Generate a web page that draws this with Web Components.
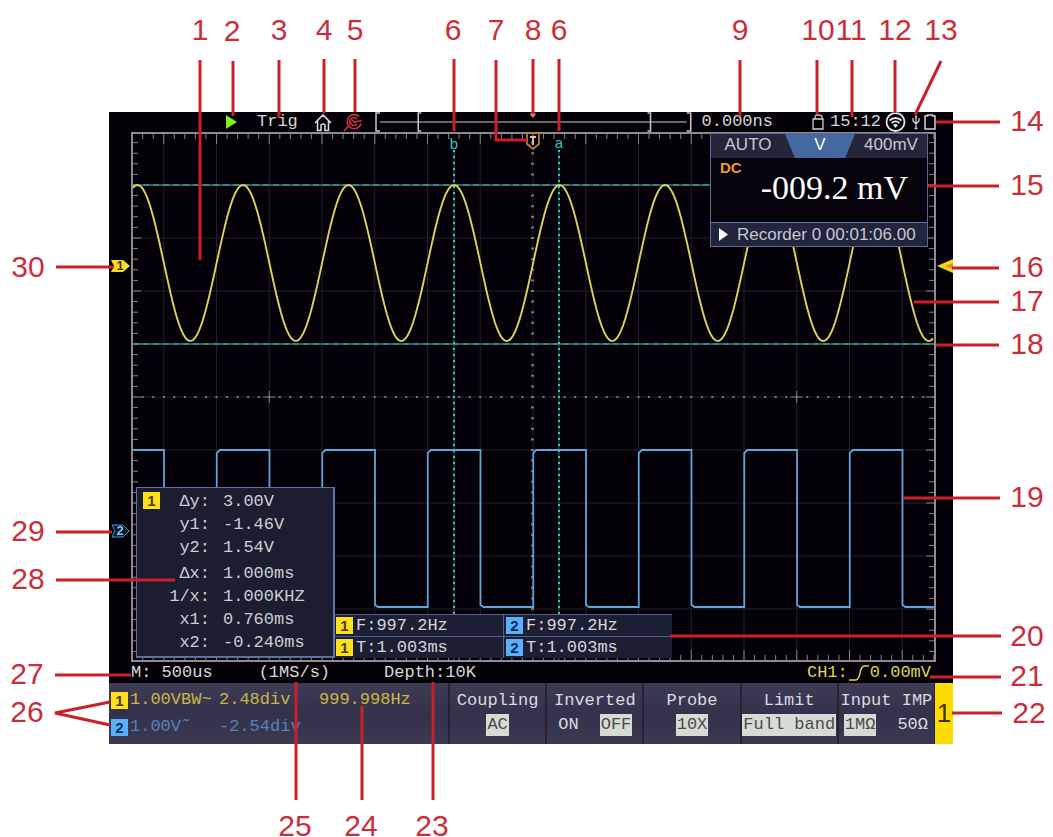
<!DOCTYPE html>
<html lang="en">
<head>
<meta charset="utf-8">
<title>Oscilloscope display guide</title>
<style>
body { margin: 0; background: #fff; font-family: "Liberation Sans", Arial, sans-serif; }
</style>
</head>
<body>
<display-guide></display-guide>
<script>
const define = (name, html, setup) => {
  const template = document.createElement('template');
  template.innerHTML = html;
  customElements.define(name, class extends HTMLElement {
    connectedCallback() {
      if (this.shadowRoot) return;
      this.attachShadow({ mode: 'open' }).append(template.content.cloneNode(true));
      if (setup) setup(this, this.shadowRoot);
    }
  });
};

/* Numbered square that names a channel */
define('channel-badge', `
<style>
:host { display: block; flex: none; width: 17px; height: 17px; background: #ffe01c; color: #4a3a00;
  font: bold 15px/17px "Liberation Sans", Arial, sans-serif; text-align: center; white-space: normal; }
:host([channel="2"]) { background: #5cb0fa; color: #06305e; }
</style><slot></slot>`);

/* Top status line */
define('status-bar', `
<style>
:host { display: flex; align-items: center; height: 20px; padding-left: 116px; padding-right: 17px;
  color: #d6d6d6; font: 17px/20px "Liberation Mono", monospace; white-space: nowrap; }
svg { display: block; flex: none; }
.trig { margin: 0 16px 0 20px; }
.zoom { margin-left: 11px; }
.overview { flex: 1; height: 20px; margin-left: 12px; min-width: 0; }
.delay { margin-left: 10px; }
.lock { margin: 0 6px 0 39px; }
.wifi { margin-left: 4px; }
.usb { margin: 0 4px 0 6px; }
</style>
<svg width="12" height="14" viewBox="0 0 12 14"><path d="M1 0L12 7 1 14z" fill="#7df01e"/></svg>
<span class="trig">Trig</span>
<svg width="18" height="19" viewBox="0 0 18 19" fill="none" stroke="#d6d6d6" stroke-width="1.6"><path d="M1 10L9 2l8 8M3.5 8v9.500h3.500v-5.500q2-2 4 0v5.500h3.500V8"/></svg>
<svg class="zoom" width="20" height="20" viewBox="0 0 20 20" fill="none" stroke="#c8323c" stroke-width="1.700"><path d="M16 4.500A7 7 0 1 0 18 11.500M5 14.500L1 19M14 7a4 4 0 1 0 0 5M9 8l3 2.500 3-1.500h4"/></svg>
<svg class="overview" viewBox="0 0 315 20" preserveAspectRatio="none" fill="none" stroke="#c9c9c9">
<path d="M5 1H1v18h4M310 1h4v18h-4M46 1h-3v18h3M271 1h3v18h-3" stroke-width="1.500"/><path d="M5 10H310" />
<path d="M154.500 1h5v2l-2.500 3-2.500-3z" fill="#c98a50" stroke="none"/></svg>
<span class="delay">0.000ns</span>
<svg class="lock" width="12" height="16" viewBox="0 0 12 16" fill="none" stroke="#cfcfcf" stroke-width="1.300"><path d="M1 5h10v10H1zM3 5V3q0-2 3-2 4 0 4 2v2"/></svg>
<time>15:12</time>
<svg class="wifi" width="21" height="20" viewBox="0 0 21 20" fill="none" stroke="#e8e8e8" stroke-width="1.800"><circle cx="10.500" cy="10" r="9"/><path d="M4.500 8.500q6-5 12 0M6.500 11q4-3.200 8 0"/><path d="M8 13q2.500-2 5 0L10.500 16z" fill="#e8e8e8" stroke="none"/></svg>
<svg class="usb" width="8" height="15" viewBox="0 0 8 15" fill="none" stroke="#d0d0d0" stroke-width="1.300"><path d="M4 2v12M1 3v3l3 3 3-3V3M3 1.500h2M2.500 13.500h3"/></svg>
<svg width="12" height="16" viewBox="0 0 12 16" fill="none" stroke="#cfcfcf" stroke-width="1.500"><path d="M1 2h2.500V1h5v1H11v13H1z"/></svg>`);

/* Graticule, waveforms and measuring cursors */
define('wave-grid', `
<style>
:host { display: block; position: absolute; inset: 0; }
svg { display: block; width: 100%; height: 100%; }
path { fill: none; }
text { font: 15px "Liberation Sans", Arial, sans-serif; fill: #35c3c0; text-anchor: middle; }
</style>
<svg viewBox="0 0 805 530" preserveAspectRatio="none">
<path id="grid" stroke="#252129"/>
<path id="ticks" stroke="#86808a"/>
<path id="dots" stroke="#7b767f" stroke-width="2"/>
<rect x="1" y="1" width="803" height="528" fill="none" stroke="#8f8b93" stroke-width="2"/>
<path d="M2 53H803M2 212H803" stroke="#267e7e" stroke-width="1.500"/>
<path d="M2 53H803M2 212H803" stroke="#58ab9e" stroke-dasharray="6 4"/>
<path d="M323 18V528M428 18V528" stroke="#1c6468"/>
<path d="M323 18V528M428 18V528" stroke="#4dc4b0" stroke-width="2" stroke-dasharray="2 4"/>
<path id="square" stroke="#5fa5d8" stroke-width="1.800"/>
<path id="sine" stroke="#dcd35c" stroke-width="1.900"/>
<path d="M396 1h12v11l-6 5-6-5z" stroke="#b98236" stroke-width="1.700"/><path d="M399 5h6M402 5v8" stroke="#d8c9a0" stroke-width="1.800"/>
<text x="323" y="17">b</text><text x="428" y="16">a</text>
</svg>`, (host, root) => {
  const set = (id, d) => root.getElementById(id).setAttribute('d', d);
  const centre = 402, division = 52.75, middle = 265;
  let grid = '', ticks = '', dots = '';
  for (let k = -7; k <= 7; k++) grid += `M${centre + k * division} 2V528`;
  for (let k = 1; k < 10; k++) grid += `M2 ${k * 53}H803`;
  for (let k = -38; k <= 38; k++) {
    const x = centre + k * division / 5, size = k % 5 ? 5 : 10;
    ticks += `M${x} 2v${size}M${x} 528v-${size}`;
    dots += `M${x - 1} ${middle}h2`;
  }
  for (let k = 1; k < 50; k++) {
    const y = k * 10.6, size = k % 5 ? 5 : 8;
    ticks += `M2 ${y}h${size}M803 ${y}h-${size}`;
    dots += `M${centre - 2} ${y}h3`;
  }
  for (const k of [-5, 5]) ticks += `M${centre + k * division - 6} ${middle}h12m-6-6v12`;
  set('grid', grid); set('ticks', ticks); set('dots', dots);

  let sine = '';
  for (let x = 2; x <= 803; x += 2)
    sine += `${sine ? 'L' : 'M'}${x} ${(131 - 78 * Math.cos((x - 323) / (2 * division) * 2 * Math.PI)).toFixed(1)}`;
  set('sine', sine);

  let square = 'M2 318H33';
  for (let x = 33; x < 780; x += 2 * division) {
    const rise = x + division, fall = rise + division;
    square += `V473l3 2H${Math.min(rise, 803)}`;
    if (rise < 803) square += `V321l3-3H${fall}`;
  }
  set('square', square);
});

/* Multimeter read-out */
define('meter-panel', `
<style>
:host { display: flex; flex-direction: column; width: 218px; height: 114px; box-sizing: border-box;
  border: 1px solid #5c6a90; background: #07030c; color: #c8c8d0; font: 17px/21px "Liberation Sans", Arial, sans-serif; }
header { display: grid; grid-template-columns: 74px 70px 1fr; height: 24px; flex: none; background: #24243a; text-align: center; }
.mode { background: #43679f; color: #fff; clip-path: polygon(0 0, 100% 0, 86% 100%, 14% 100%); }
.body { flex: 1; padding: 1px 19px 0 9px; min-height: 0; }
.type { font: bold 15px/17px "Liberation Sans", Arial, sans-serif; color: #e99a43; }
.value { font: 34px/32px "Liberation Serif", serif; color: #fff; text-align: right; white-space: nowrap; margin-top: -4px; }
footer { display: flex; flex: none; align-items: center; gap: 9px; height: 23px; border-top: 1px solid #62739e; padding-left: 7px; background: #20243c; white-space: nowrap; }
</style>
<header><span>AUTO</span><span class="mode">V</span><span>400mV</span></header>
<div class="body"><div class="type">DC</div><div class="value">-009.2 mV</div></div>
<footer><svg width="10" height="13" viewBox="0 0 10 13"><path d="M1 0L10 6.500 1 13z" fill="#fff"/></svg><span>Recorder 0 00:01:06.00</span></footer>`);

/* Cursor measurements */
define('cursor-panel', `
<style>
:host { display: block; position: relative; width: 199px; height: 171px; box-sizing: border-box; padding: 2px 0 0 4px;
  border: 2px solid #60729f; border-top-width: 1px; border-left-width: 1px; background: #1c1d31; color: #cdcdd2; font: 17px/23px "Liberation Mono", monospace; }
channel-badge { position: absolute; left: 6px; top: 4px; }
dl { display: grid; grid-template-columns: 69px 1fr; column-gap: 13px; margin: 0; }
dt { text-align: right; } dd { margin: 0; white-space: nowrap; }
.gap { margin-top: 3px; }
</style>
<channel-badge channel="1">1</channel-badge>
<dl><dt>Δy:</dt><dd>3.00V</dd><dt>y1:</dt><dd>-1.46V</dd><dt>y2:</dt><dd>1.54V</dd>
<dt class="gap">Δx:</dt><dd class="gap">1.000ms</dd><dt>1/x:</dt><dd>1.000KHZ</dd><dt>x1:</dt><dd>0.760ms</dd><dt>x2:</dt><dd>-0.240ms</dd></dl>`);

/* Automatic frequency and period measurements */
define('measure-panel', `
<style>
:host { display: grid; grid-template-columns: 169px 168px; grid-auto-rows: 22px; color: #d6d6da; font: 17px/20px "Liberation Mono", monospace; }
div { display: flex; align-items: center; gap: 3px; padding: 0 2px; background: #1c1e33; border-top: 1px solid #52628f; box-sizing: border-box; }
div:nth-child(even) { border-right: 1px solid #52628f; padding-left: 1px; }
</style>
<div><channel-badge channel="1">1</channel-badge><span>F:997.2Hz</span></div>
<div><channel-badge channel="2">2</channel-badge><span>F:997.2Hz</span></div>
<div><channel-badge channel="1">1</channel-badge><span>T:1.003ms</span></div>
<div><channel-badge channel="2">2</channel-badge><span>T:1.003ms</span></div>`);

/* Timebase and trigger line */
define('timebase-bar', `
<style>
:host { display: flex; align-items: center; height: 21px; padding: 0 22px; color: #d8d8d8; font: 17px/21px "Liberation Mono", monospace; white-space: nowrap; }
.rate { margin: 0 54px 0 46px; }
.trigger { display: flex; align-items: center; margin-left: auto; color: #d9d652; }
</style>
<span>M: 500us</span><span class="rate">(1MS/s)</span><span>Depth:10K</span>
<span class="trigger">CH1:<svg width="22" height="18" viewBox="0 0 22 18" fill="none" stroke="#d9d652" stroke-width="1.500"><path d="M1 16h7q3-1 4-7t4-7h5"/></svg>0.00mV</span>`);

/* Setting in the bottom menu: options are slotted */
define('menu-item', `
<style>
:host { display: flex; flex-direction: column; align-items: center; gap: 2px; flex: 1 1 0; min-width: 0; box-sizing: border-box; padding-top: 7px;
  border-left: 2px solid #24232f; color: #dadae0; font: 17px/22px "Liberation Mono", monospace; white-space: nowrap; }
.options { display: flex; gap: 20px; justify-content: center; }
::slotted(button) { margin: 0; padding: 0 1px; border: 0; background: none; color: #dadae0; font: 17px/22px "Liberation Mono", monospace; white-space: nowrap; }
::slotted(button[aria-pressed="true"]) { background: #d7dbd6; color: #4a4c48; }
</style>
<span id="title"></span><div class="options" role="group"><slot></slot></div>`, (host, root) => {
  const title = host.getAttribute('label');
  root.getElementById('title').textContent = title;
  root.querySelector('.options').setAttribute('aria-label', title);
});

define('channel-info', `
<style>
:host { display: flex; flex: none; flex-direction: column; gap: 5px; width: 339px; box-sizing: border-box; padding: 6px 0 0 2px; font: 17px/22px "Liberation Mono", monospace; white-space: nowrap; }
div { display: grid; grid-template-columns: 17px 87px 98px 1fr; column-gap: 2px; align-items: center; color: #c8b544; }
.two { color: #587fba; }
</style>
<div><channel-badge channel="1">1</channel-badge><span>1.00VBW~</span><span>2.48div</span><span>999.998Hz</span></div>
<div class="two"><channel-badge channel="2">2</channel-badge><span>1.00V˜</span><span>-2.54div</span></div>`);

define('scope-menu', `
<style>
:host { display: flex; height: 61px; background: linear-gradient(#3e3c55, #34324a 50%, #3b3951); }
.page { flex: none; width: 19px; margin: 0; padding: 0; border: 0; border-left: 1px solid #24232f; background: #ffdc00; color: #3d3300; font: 26px/61px "Liberation Sans", Arial, sans-serif; }
</style>
<channel-info></channel-info>
<menu-item label="Coupling"><button aria-pressed="true">AC</button></menu-item>
<menu-item label="Inverted"><button aria-pressed="false">ON</button><button aria-pressed="true">OFF</button></menu-item>
<menu-item label="Probe"><button aria-pressed="true">10X</button></menu-item>
<menu-item label="Limit"><button aria-pressed="true">Full band</button></menu-item>
<menu-item label="Input IMP"><button aria-pressed="true">1MΩ</button><button aria-pressed="false">50Ω</button></menu-item>
<button class="page">1</button>`);

define('scope-screen', `
<style>
:host { display: block; background: #050108; }
.view { display: grid; grid-template-columns: 22px 1fr 17px; }
.plot { position: relative; aspect-ratio: 805 / 530; }
.gutter { position: relative; }
.gutter svg { position: absolute; left: 0; }
.level-1 { top: 24%; }
.level-2 { top: 74%; }
meter-panel { position: absolute; right: 8px; top: 1px; }
cursor-panel { position: absolute; left: 5px; bottom: 4px; }
measure-panel { position: absolute; left: 204px; bottom: 4px; }
</style>
<status-bar></status-bar>
<div class="view">
<div class="gutter">
<svg class="level-1" width="22" height="14" viewBox="0 0 22 14"><path d="M2 1h12l7 6-7 6H2l3-6z" fill="#f4dc28"/><text x="11" y="11" text-anchor="middle" font-family="Liberation Sans" font-weight="bold" font-size="12" fill="#3a2f00">1</text></svg>
<svg class="level-2" width="22" height="14" viewBox="0 0 22 14"><path d="M3 1h11l6 6-6 6H3l3-6z" fill="#07121f" stroke="#4f9bdb"/><text x="11" y="11" text-anchor="middle" font-family="Liberation Sans" font-weight="bold" font-size="13" fill="#7fc4ff">2</text></svg>
</div>
<div class="plot"><wave-grid></wave-grid><meter-panel></meter-panel><cursor-panel></cursor-panel><measure-panel></measure-panel></div>
<div class="gutter"><svg class="level-1" width="17" height="14" viewBox="0 0 17 14"><path d="M1 7L17 0v14z" fill="#f6d624"/><path d="M9 7l8-3v6z" fill="#f08a1c"/></svg></div>
</div>
<timebase-bar></timebase-bar>
<scope-menu></scope-menu>`);

/* Numbers and leader lines laid over the figure: [number, text x, text y, line path] */
define('call-outs', `
<style>
:host { display: block; position: absolute; inset: 0; pointer-events: none; }
svg { display: block; width: 100%; height: 100%; }
text { font: 30px "Liberation Sans", Arial, sans-serif; fill: #c92f3a; text-anchor: middle; }
path { fill: none; stroke: #cb1f29; stroke-width: 3; }
</style>
<svg viewBox="0 0 1053 837" role="img" aria-label="Numbered parts of the display"></svg>`, (host, root) => {
  const parts = [
    [1, 200, 40, 'M200 60V260'], [2, 232, 41, 'M233 61V116'], [3, 279, 40, 'M279 60V118'], [4, 324, 40, 'M324 59V113'],
    [5, 355, 40, 'M355 59V112'], [6, 453, 40, 'M454 59V131'], [7, 496, 40, 'M496 60V140H527'], [8, 533, 40, 'M533 59V114'],
    [6, 559, 40, 'M559 59V131'], [9, 740, 40, 'M740 60V116'], [10, 818, 40, 'M817 60V114'], [11, 851, 40, 'M852 60V117'],
    [12, 895, 40, 'M895 60V113'], [13, 941, 40, 'M941 61L915 115'], [14, 1027, 131, 'M936 122H1000'], [15, 1027, 195, 'M928 186H999'],
    [16, 1027, 277, 'M952 268H999'], [17, 1027, 311, 'M914 302H999'], [18, 1027, 354, 'M936 345H999'], [19, 1027, 507, 'M903 498H1000'],
    [20, 1027, 646, 'M670 636H1001'], [21, 1027, 686, 'M930 677H1001'], [22, 1029, 723, 'M952 713H1002'], [23, 432, 836, 'M433 682V800'],
    [24, 361, 836, 'M362 706V800'], [25, 295, 836, 'M296 682V800'], [26, 27, 722, 'M110 702L55 713L110 725'], [27, 27, 684, 'M55 675H131'],
    [28, 28, 589, 'M56 580H175'], [29, 28, 541, 'M56 532H112'], [30, 28, 277, 'M56 267H114'],
  ];
  root.querySelector('svg').innerHTML = parts.map(([n, x, y, d]) => `<path d="${d}"/><text x="${x}" y="${y}">${n}</text>`).join('');
});

define('display-guide', `
<style>
:host { display: block; position: relative; padding: 112px 100px 93px 109px; overflow: hidden; }
</style>
<scope-screen></scope-screen><call-outs></call-outs>`);
</script>
</body>
</html>
